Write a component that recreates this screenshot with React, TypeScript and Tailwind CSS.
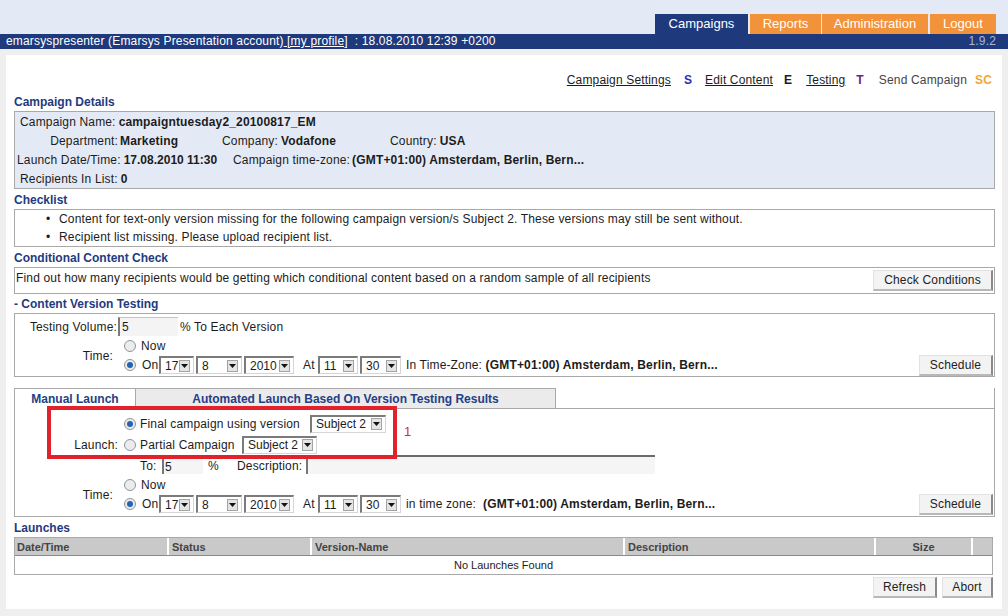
import clsx from 'clsx'
import type { ReactNode } from 'react'

function Radio({ checked }: { checked?: boolean }) {
  return (
    <span className="flex h-[12px] w-[12px] shrink-0 items-center justify-center rounded-full border border-[#8d96a3] bg-[#ececec]">
      {checked && <span className="h-[6px] w-[6px] rounded-full bg-[#2462b3]" />}
    </span>
  )
}

function Sel({ v, className }: { v: string; className: string }) {
  return (
    <span
      className={clsx(
        'inline-flex h-[18px] shrink-0 items-center border-t-2 border-l-2 border-r border-b border-t-[#7b7b7b] border-l-[#7b7b7b] border-r-[#d6d6d6] border-b-[#d6d6d6] bg-white pl-[4px] pr-[3px] tracking-normal',
        className,
      )}
    >
      <span className="flex-1 leading-[14px]">{v}</span>
      <span className="flex h-[12px] w-[11px] items-center justify-center border border-[#a3a3a3] bg-[#e4e4e4]">
        <svg width="7" height="4" viewBox="0 0 7 4">
          <path d="M0 0h7L3.5 4z" fill="#111" />
        </svg>
      </span>
    </span>
  )
}

function Btn({ children, className }: { children: ReactNode; className: string }) {
  return (
    <button
      className={clsx(
        'flex h-[21px] shrink-0 items-center justify-center border-t border-l border-r-2 border-b-2 border-t-[#e2e2e2] border-l-[#e2e2e2] border-r-[#8a8a8a] border-b-[#b8b8b8] bg-[#f3f3f3] text-[12px] text-[#222]',
        className,
      )}
    >
      {children}
    </button>
  )
}

function Heading({ children, className }: { children: ReactNode; className: string }) {
  return <div className={clsx('h-[14px] font-bold tracking-normal text-[#1f3a7e]', className)}>{children}</div>
}

function DateRow({ tzLabel }: { tzLabel: ReactNode }) {
  return (
    <div className="flex h-[20px] items-center">
      <Radio checked />
      <span className="ml-[6px] w-[17px]">On</span>
      <Sel v="17" className="w-[35px]" />
      <Sel v="8" className="ml-[2px] w-[46px]" />
      <Sel v="2010" className="ml-[2px] w-[50px]" />
      <span className="ml-[9px] w-[15px]">At</span>
      <Sel v="11" className="w-[40px]" />
      <Sel v="30" className="ml-[2px] w-[41px]" />
      <span className="ml-[5px]">{tzLabel}</span>
      <Btn className="ml-auto mr-[1px] w-[74px]">Schedule</Btn>
    </div>
  )
}

export default function App() {
  return (
    <div className="h-[616px] w-[1008px] overflow-hidden bg-[#efefef] font-['Liberation_Sans',Arial,sans-serif] text-[12px] leading-[14px] tracking-[0.16px] text-[#1c1c1c]">
      <div className="flex h-[34px] items-end justify-end bg-[#e3eaf5] pr-[12px] text-[13px] tracking-normal text-white">
        <div className="flex h-[20px] w-[93px] items-center justify-center bg-[#1e3a7d]">Campaigns</div>
        <div className="ml-[2px] flex h-[20px] w-[71px] items-center justify-center bg-[#f2923a]">Reports</div>
        <div className="ml-[1px] flex h-[20px] w-[106px] items-center justify-center bg-[#f2923a]">Administration</div>
        <div className="ml-[2px] flex h-[20px] w-[66px] items-center justify-center bg-[#f2923a]">Logout</div>
      </div>
      <div className="flex h-[15px] items-center justify-between bg-[#1e3a7d] pl-[6px] pr-[12px] leading-[15px] text-white">
        <span>
          emarsyspresenter (Emarsys Presentation account)<span className="underline"> [my profile]</span>&nbsp; : 18.08.2010 12:39 +0200
        </span>
        <span className="text-[#aab6d0]">1.9.2</span>
      </div>

      <div className="pl-[6px] pt-[6px]">
        <main className="h-[554px] w-[996px] bg-white pl-[8px] pr-[7px] pt-[18px]">
          <nav className="mr-[3px] flex h-[14px] items-center justify-end">
            <a className="underline">Campaign Settings</a>
            <b className="ml-[13px] text-[#2430b8]">S</b>
            <a className="ml-[13px] underline">Edit Content</a>
            <b className="ml-[11px]">E</b>
            <a className="ml-[14px] underline">Testing</a>
            <b className="ml-[11px] text-[#6b2388]">T</b>
            <span className="ml-[15px] text-[#444]">Send Campaign</span>
            <b className="ml-[8px] text-[#f4a735]">SC</b>
          </nav>

          <Heading className="mt-[8px]">Campaign Details</Heading>
          <div className="mt-[2px] border border-[#a9a9a9] bg-[#e4eaf5]">
            <div className="flex h-[19px] items-center pl-[5px]">
              Campaign Name:<b className="ml-[3px]">campaigntuesday2_20100817_EM</b>
            </div>
            <div className="flex h-[19px] items-center">
              <span className="w-[103px] text-right">Department:</span>
              <b className="w-[104px] pl-[2px]">Marketing</b>
              <span className="w-[168px]">
                Company:<b className="ml-[3px]">Vodafone</b>
              </span>
              <span>
                Country:<b className="ml-[3px]">USA</b>
              </span>
            </div>
            <div className="flex h-[19px] items-center pl-[2px]">
              <span className="w-[216px]">
                Launch Date/Time:<b className="ml-[3px] tracking-normal">17.08.2010 11:30</b>
              </span>
              <span>
                Campaign time-zone:<b className="ml-[2px]">(GMT+01:00) Amsterdam, Berlin, Bern...</b>
              </span>
            </div>
            <div className="flex h-[19px] items-center pl-[5px]">
              Recipients In List:<b className="ml-[3px]">0</b>
            </div>
          </div>

          <Heading className="mt-[4px]">Checklist</Heading>
          <div className="mt-[2px] border border-[#a9a9a9]">
            <div className="flex h-[18px] items-center pl-[31px]">
              <span className="w-[13px]">•</span>
              Content for text-only version missing for the following campaign version/s Subject 2. These versions may still be sent without.
            </div>
            <div className="flex h-[18px] items-center pl-[31px]">
              <span className="w-[13px]">•</span>
              Recipient list missing. Please upload recipient list.
            </div>
          </div>

          <Heading className="mt-[4px]">Conditional Content Check</Heading>
          <div className="mt-[2px] flex h-[27px] items-center border border-[#a9a9a9] pl-[1px]">
            <span className="self-start pt-[3px]">Find out how many recipients would be getting which conditional content based on a random sample of all recipients</span>
            <Btn className="ml-auto mr-[1px] w-[120px]">Check Conditions</Btn>
          </div>

          <Heading className="mt-[3px]">- Content Version Testing</Heading>
          <div className="mt-[2px] border border-[#a9a9a9] pb-[1px] pt-[2px]">
            <div className="flex h-[21px] items-center">
              <span className="w-[102px] text-right">Testing Volume:</span>
              <span className="ml-[1px] flex h-[19px] w-[60px] items-center border-l-2 border-t border-l-[#7a7a7a] border-t-[#c4c4c4] bg-[#f4f4f4] pl-[2px]">5</span>
              <span className="ml-[2px]">% To Each Version</span>
            </div>
            <div className="flex">
              <span className="w-[98px] self-center text-right">Time:</span>
              <div className="ml-[11px] flex-1">
                <div className="flex h-[18px] items-center">
                  <Radio />
                  <span className="ml-[5px]">Now</span>
                </div>
                <DateRow
                  tzLabel={
                    <>
                      In Time-Zone: <b>(GMT+01:00) Amsterdam, Berlin, Bern...</b>
                    </>
                  }
                />
              </div>
            </div>
          </div>

          <div className="relative mt-[11px]">
            <div className="flex h-[21px] tracking-normal">
              <div className="flex w-[121px] items-center justify-center border-l border-t border-[#a9a9a9] bg-white font-bold text-[#233f86]">
                Manual Launch
              </div>
              <div className="flex w-[421px] items-center justify-center border border-[#a9a9a9] bg-[#ebebeb] font-bold text-[#233f86]">
                Automated Launch Based On Version Testing Results
              </div>
              <div className="flex-1 border-b border-r border-[#a9a9a9]" />
            </div>
            <div className="border-x border-b border-[#a9a9a9] pb-[2px] pt-[4px]">
              <div className="flex h-[21px] items-center pl-[109px]">
                <Radio checked />
                <span className="ml-[4px] w-[170px]">Final campaign using version</span>
                <Sel v="Subject 2" className="w-[76px]" />
              </div>
              <div className="flex h-[21px] items-center">
                <span className="w-[103px] text-right">Launch:</span>
                <span className="ml-[6px]">
                  <Radio />
                </span>
                <span className="ml-[4px] w-[102px]">Partial Campaign</span>
                <Sel v="Subject 2" className="w-[75px]" />
              </div>
              <div className="flex h-[21px] items-center pl-[125px]">
                <span className="w-[22px]">To:</span>
                <span className="flex h-[17px] w-[41px] items-center border-l-2 border-t-2 border-l-[#777] border-t-[#777] bg-[#f5f5f5] pl-[1px]">5</span>
                <span className="ml-[5px] w-[29px]">%</span>
                <span className="w-[69px]">Description:</span>
                <span className="h-[19px] w-[349px] self-start border-l-2 border-t-2 border-l-[#777] border-t-[#6a6a6a] bg-[#f5f5f5]" />
              </div>
              <div className="flex">
                <span className="w-[98px] self-center text-right">Time:</span>
                <div className="ml-[11px] flex-1">
                  <div className="flex h-[18px] items-center">
                    <Radio />
                    <span className="ml-[5px]">Now</span>
                  </div>
                  <DateRow
                    tzLabel={
                      <>
                        in time zone:&nbsp; <b>(GMT+01:00) Amsterdam, Berlin, Bern...</b>
                      </>
                    }
                  />
                </div>
              </div>
            </div>
            <div className="absolute left-[33px] top-[18px] h-[53px] w-[350px] border-4 border-[#e2222a]" />
            <span className="absolute left-[390px] top-[37px] text-[13px] text-[#d0302f]">1</span>
          </div>

          <Heading className="mt-[4px]">Launches</Heading>
          <div className="mr-[2px] mt-[2px] border border-[#a9a9a9] text-[11px] tracking-normal">
            <div className="flex h-[18px] border-b border-[#8a8a8a] bg-[#c9c9c9] font-bold text-[#444]">
              <div className="flex w-[154px] items-center border-r-2 border-white pl-[2px]">Date/Time</div>
              <div className="flex w-[143px] items-center border-r-2 border-white pl-[3px]">Status</div>
              <div className="flex w-[313px] items-center border-r-2 border-white pl-[3px]">Version-Name</div>
              <div className="flex w-[251px] items-center border-r-2 border-white pl-[3px]">Description</div>
              <div className="flex w-[97px] items-center justify-center border-r-2 border-white">Size</div>
              <div className="flex-1" />
            </div>
            <div className="flex h-[18px] items-center justify-center">No Launches Found</div>
          </div>
          <div className="mr-[2px] mt-[2px] flex justify-end gap-[5px]">
            <Btn className="w-[64px]">Refresh</Btn>
            <Btn className="w-[51px]">Abort</Btn>
          </div>
        </main>
      </div>
    </div>
  )
}
